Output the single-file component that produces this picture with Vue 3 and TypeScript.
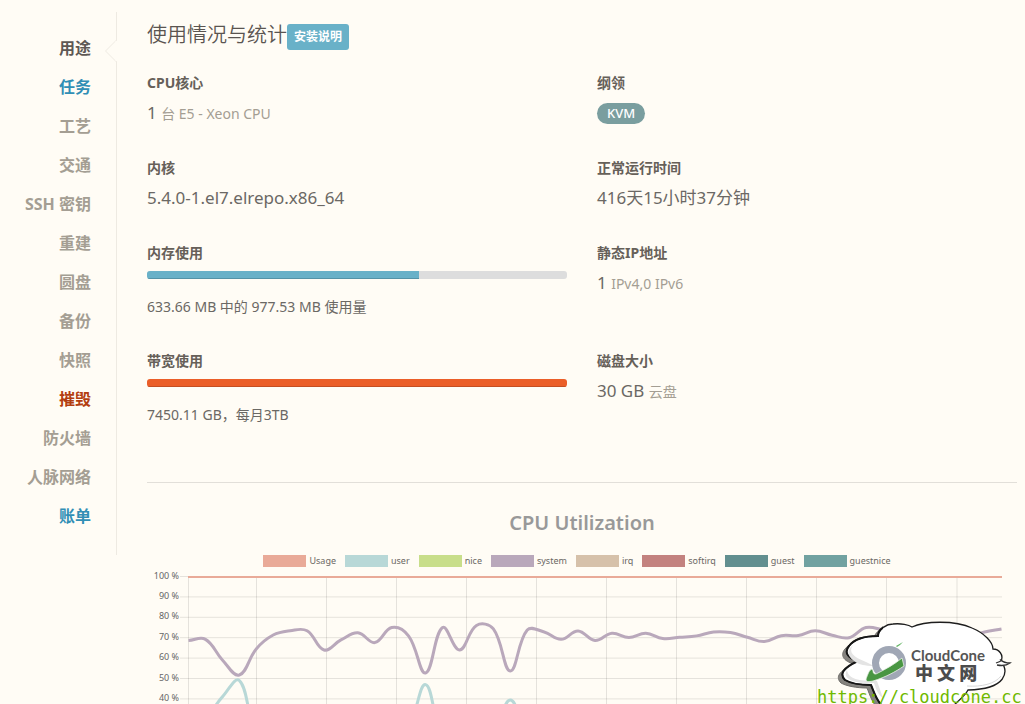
<script setup lang="ts">
interface NavItem { label: string; tone?: 'active' | 'info' | 'danger' }
interface Series { label: string; color: string }

const nav: NavItem[] = [
  { label: '用途', tone: 'active' },
  { label: '任务', tone: 'info' },
  { label: '工艺' },
  { label: '交通' },
  { label: 'SSH 密钥' },
  { label: '重建' },
  { label: '圆盘' },
  { label: '备份' },
  { label: '快照' },
  { label: '摧毁', tone: 'danger' },
  { label: '防火墙' },
  { label: '人脉网络' },
  { label: '账单', tone: 'info' },
]

const legend: Series[] = [
  { label: 'Usage', color: '#e9aa98' },
  { label: 'user', color: '#b8d8d7' },
  { label: 'nice', color: '#c8de8a' },
  { label: 'system', color: '#b9a8bb' },
  { label: 'irq', color: '#d6c1aa' },
  { label: 'softirq', color: '#c3827f' },
  { label: 'guest', color: '#628f8f' },
  { label: 'guestnice', color: '#71a2a1' },
]

const plot = { left: 41.5, right: 854.5, top: 6.5, step: 204 / 10 }
const ticks = [100, 90, 80, 70, 60, 50, 40]
const columns = [41.5, 109.5, 179.5, 249.5, 319.5, 389.5, 459.5, 529.5, 599.5, 669.5, 739.5, 810]

const system: number[] = [
  68.6, 69.2, 59.1, 51.7, 64.5, 71.3, 73.4, 73.4, 64, 68.9, 72.4, 67.6, 75, 70.8, 52.7, 75, 64,
  76, 74.3, 53.7, 73.8, 72.8, 69.2, 73.3, 68.6, 72.2, 70.1, 72.2, 69.6, 70.2, 70.9, 72.8, 72.5,
  70.2, 68.1, 71, 71.1, 73.4, 71.2, 70, 75, 73.8, 72, 71, 70.5, 70, 70.5, 72.8, 74.3,
]
const userPeaks: Record<number, number> = { 1: 31, 2: 41, 3: 49, 4: 25, 14: 47, 19: 39.5 }
const user: number[] = system.map((v, i) => userPeaks[i] ?? Math.min(28, 98 - v))

const yOf = (v: number): number => plot.top + ((100 - v) * plot.step) / 10

// Cardinal spline whose handles are weighted by the distance to each neighbour.
function spline(values: number[]): string {
  const dx = (plot.right - plot.left) / (values.length - 1)
  const pts = values.map((v, i) => ({ x: plot.left + i * dx, y: yOf(v) }))
  const handles = pts.map((p, i) => {
    const a = pts[i - 1] ?? p
    const b = pts[i + 1] ?? p
    const d1 = Math.hypot(p.x - a.x, p.y - a.y)
    const d2 = Math.hypot(b.x - p.x, b.y - p.y)
    const f1 = (0.4 * d1) / (d1 + d2)
    const f2 = (0.4 * d2) / (d1 + d2)
    return {
      inX: p.x - f1 * (b.x - a.x), inY: p.y - f1 * (b.y - a.y),
      outX: p.x + f2 * (b.x - a.x), outY: p.y + f2 * (b.y - a.y),
    }
  })
  return pts
    .map((p, i) => {
      if (i === 0) return `M${p.x} ${p.y}`
      const h = handles[i - 1]
      const k = handles[i]
      return `C${h.outX} ${h.outY} ${k.inX} ${k.inY} ${p.x} ${p.y}`
    })
    .join('')
}

const systemPath = spline(system)
const userPath = spline(user)
const cloud =
  'M61 16C61 9 70 4 76 4C84 3 92 5 95 7C107 1 138 0 155 8C167 13 176 22 176 29C182 29 187 35 184 41' +
  'C192 52 190 69 151 70C148 76 142 80 135 87H66C59 80 57 72 54 65C44 65 33 63 28 60' +
  'C22 54 26 48 41 41C30 38 27 32 32 26C38 18 50 16 61 16Z'
</script>

<template>
  <div class="page">
    <nav class="side">
      <ul>
        <li v-for="item in nav" :key="item.label">
          <a href="#" :class="item.tone">{{ item.label }}</a>
        </li>
      </ul>
      <svg class="notch" width="13" height="24" viewBox="0 0 13 24" aria-hidden="true">
        <path d="M12.500 0V1L1.500 12L12.500 23V24Z" fill="#fffcf5" />
        <path d="M12.500 1L1.500 12L12.500 23" fill="none" stroke="#eeeae2" />
        <path d="M12.500 2V22" stroke="#fffcf5" stroke-width="2" />
      </svg>
    </nav>

    <main class="content">
      <header class="head">
        <h2>使用情况与统计</h2>
        <button type="button" class="guide">安装说明</button>
      </header>

      <div class="facts">
        <section>
          <h3>CPU核心</h3>
          <p>1 <small>台 E5 - Xeon CPU</small></p>
        </section>
        <section>
          <h3>纲领</h3>
          <div class="tags"><span class="pill">KVM</span></div>
        </section>
        <section>
          <h3>内核</h3>
          <p>5.4.0-1.el7.elrepo.x86_64</p>
        </section>
        <section>
          <h3>正常运行时间</h3>
          <p>416天15小时37分钟</p>
        </section>
        <section>
          <h3 id="mem">内存使用</h3>
          <div class="bar" role="progressbar" aria-labelledby="mem" aria-valuenow="65">
            <div class="fill memory" :style="{ width: (633.66 / 977.53) * 100 + '%' }"></div>
          </div>
          <div class="note">633.66 MB 中的 977.53 MB 使用量</div>
        </section>
        <section>
          <h3>静态IP地址</h3>
          <p>1 <small>IPv4,0 IPv6</small></p>
        </section>
        <section>
          <h3 id="net">带宽使用</h3>
          <div class="bar" role="progressbar" aria-labelledby="net" aria-valuenow="100">
            <div class="fill traffic" :style="{ width: '100%' }"></div>
          </div>
          <div class="note">7450.11 GB，每月3TB</div>
        </section>
        <section>
          <h3>磁盘大小</h3>
          <p>30 GB <small>云盘</small></p>
        </section>
      </div>

      <section class="chart">
        <h4>CPU Utilization</h4>
        <ul class="legend">
          <li v-for="s in legend" :key="s.label">
            <span class="swatch" :style="{ background: s.color }"></span>{{ s.label }}
          </li>
        </ul>
        <svg class="plot" viewBox="0 0 870 140">
          <g stroke="#000" stroke-opacity="0.1">
            <line v-for="t in ticks" :key="t" x1="33" x2="855" :y1="yOf(t)" :y2="yOf(t)" />
            <line v-for="x in columns" :key="x" :x1="x" :x2="x" y1="7" y2="140" />
          </g>
          <g class="ticks">
            <text v-for="t in ticks" :key="t" x="32" :y="yOf(t) + 2">{{ t }} %</text>
          </g>
          <path :d="userPath" class="line user" />
          <path :d="systemPath" class="line system" />
          <path d="M41 7H855" class="line usage" />
        </svg>
      </section>
    </main>

    <svg class="mark" width="210" height="86" viewBox="0 0 210 86">
      <clipPath id="left"><path d="M0 0H66V90H0Z" /></clipPath>
      <g clip-path="url(#left)">
        <path :d="cloud" transform="translate(-4 3)" fill="#85837f" stroke="#6f6d6a" />
      </g>
      <path :d="cloud" fill="#fff" stroke="#1e1e1e" stroke-width="1.300" />
      <g clip-path="url(#left)">
        <path :d="cloud" fill="none" stroke="#161616" stroke-width="2" />
      </g>
      <path d="M36 25C31 32 36 37 49 42L57 46C47 46 43 44 40 43C30 37 29 31 36 25ZM30 50C31 59 42 61 60 61L66 78C60 74 59 68 57 63C40 64 24 60 30 50Z" fill="#e4e4e4" />
      <path d="M179 43C184 41 186 40 184 40C186 42 189 43 193 43C189 46 185 46 180 45" fill="#fff" stroke="#333" stroke-width="1.300" />
      <path d="M150 66C164 67 178 64 184 56" fill="none" stroke="#d9d9d9" />
      <circle cx="72" cy="43" r="13.500" fill="none" stroke="#a0a7b5" stroke-width="7" />
      <path d="M49 59C51 54 52 50 55 49C57 51 55 54 59 54C69 49 78 44 85 38L87 46C78 52 69 57 56 61C51 62 49 62 49 59Z" fill="#499643" stroke="#e9f0e6" stroke-width="0.800" />
      <path d="M79 26L86 22L83 25L80 27Z" fill="#62b463" />
      <text x="94" y="41" class="brand">CloudCone</text>
      <text x="98" y="60" class="brand-cn">中 文 网</text>
      <text x="0" y="83" class="url">https://cloudcone.cc</text>
    </svg>
  </div>
</template>

<style>
body {
  margin: 0;
  background: #fffcf5;
}
</style>

<style scoped>
.page {
  position: relative;
  display: flex;
  align-items: flex-start;
  height: 100vh;
  overflow: hidden;
  box-sizing: border-box;
  padding: 12px 8px 0 0;
  background: #fffcf5;
  color: #6b6864;
  font-family: "Noto Sans", "Noto Sans CJK SC", sans-serif;
}
.side {
  position: relative;
  flex: 0 0 116px;
  padding: 17px 0 19px;
  border-right: 1px solid #eeeae2;
}
ul {
  list-style: none;
  margin: 0;
  padding: 0;
}
.side a {
  display: block;
  padding-right: 25px;
  text-align: right;
  font-size: 16px;
  font-weight: 700;
  line-height: 39px;
  color: #a49e93;
  text-decoration: none;
}
.side a.active { color: #5e5854; }
.side a.info { color: #318fb5; }
.side a.danger { color: #b33e10; }
.notch {
  position: absolute;
  top: 27px;
  right: -1px;
}
.content {
  flex: 1;
  min-width: 0;
  padding-left: 30px;
}
.head {
  display: flex;
  align-items: flex-start;
  height: 51px;
}
h2 {
  margin: 0;
  font-size: 20px;
  font-weight: 350;
  line-height: 46px;
  color: #5a5450;
}
.guide {
  height: 26px;
  margin-top: 12px;
  padding: 0 7px;
  border: 0;
  border-radius: 3px;
  background: #69b1c8;
  color: #fff;
  font: 700 12px/26px "Noto Sans", "Noto Sans CJK SC", sans-serif;
}
.facts {
  display: grid;
  grid-template-columns: 1fr 1fr;
  gap: 33px 30px;
  padding: 10px 0 56px;
  border-bottom: 1px solid #e2dfd9;
}
h3 {
  margin: 0;
  font-size: 14px;
  font-weight: 700;
  line-height: 20px;
  color: #666059;
}
p {
  margin: 8px 0 0;
  font-size: 17px;
  line-height: 24px;
}
small {
  font-size: 14px;
  line-height: 20px;
  color: #a49e93;
}
.tags {
  display: flex;
  margin-top: 10px;
}
.pill {
  padding: 0 10px;
  border-radius: 11px;
  background: #7a9e9f;
  color: #fff;
  font-size: 13px;
  font-weight: 500;
  line-height: 21px;
}
.bar {
  height: 8px;
  margin: 8px 0 17px;
  border-radius: 3px;
  overflow: hidden;
  background: #ddd;
}
.fill {
  height: 8px;
  box-sizing: border-box;
}
.memory {
  background: #69b1c8;
  border-bottom: 1px solid #5493a7;
}
.traffic {
  background: #eb5e28;
  border-bottom: 1px solid #c44e22;
}
.note {
  font-size: 14px;
  line-height: 22px;
}
.chart h4 {
  margin: 25px 0 16px;
  text-align: center;
  font-size: 20px;
  font-weight: 600;
  line-height: 30px;
  color: #999;
}
.legend {
  display: flex;
  justify-content: center;
  gap: 9px;
  padding-right: 10px;
}
.legend li {
  display: flex;
  align-items: center;
  gap: 3px;
  font-size: 9px;
  line-height: 14px;
}
.swatch {
  width: 43px;
  height: 12px;
}
.plot {
  display: block;
  width: 100%;
  margin-top: 2px;
  overflow: visible;
}
.ticks text {
  font-size: 9px;
  text-anchor: end;
  fill: #666;
}
.line {
  fill: none;
  stroke-width: 3;
}
.line.user { stroke: #b8d8d7; }
.line.system { stroke: #b9a8bb; }
.line.usage {
  stroke: #e9aa98;
  stroke-width: 2;
}
.mark {
  position: absolute;
  right: -2px;
  bottom: -2px;
}
.brand {
  font: 700 15px "Lato", sans-serif;
  fill: #555;
}
.brand-cn {
  font: 900 18px "Noto Sans CJK SC", sans-serif;
  fill: #4c4c4c;
}
.url {
  font: 17px "DejaVu Sans Mono", monospace;
  fill: #6fb900;
}
</style>
